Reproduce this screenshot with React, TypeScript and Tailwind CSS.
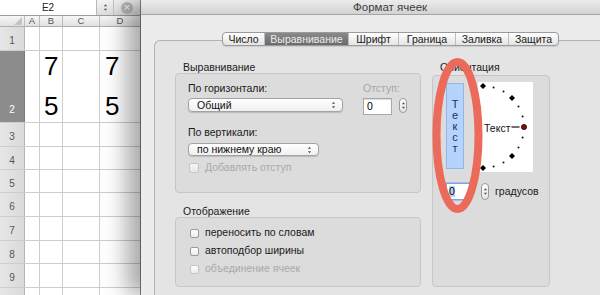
import React from 'react';

const font = "font-['Liberation_Sans',Arial,sans-serif]";

const cols = [
  { id: '', w: 'w-[25px]' },
  { id: 'A', w: 'w-[15px]' },
  { id: 'B', w: 'w-[23px]' },
  { id: 'C', w: 'w-[37px]' },
  { id: 'D', w: 'w-[40px]' },
];

// row 10 is only a sliver at the bottom edge, its number is not visible
const rows = [
  { n: '1', h: 'h-[24px]' },
  { n: '2', h: 'h-[72px]', sel: true },
  { n: '3', h: 'h-[24px]' },
  { n: '4', h: 'h-[23px]' },
  { n: '5', h: 'h-[23px]' },
  { n: '6', h: 'h-[24px]' },
  { n: '7', h: 'h-[24px]' },
  { n: '8', h: 'h-[23px]' },
  { n: '9', h: 'h-[24px]' },
  { n: '', h: 'h-[24px]' },
];

const tabs = [
  { label: 'Число', w: 'w-[42px]' },
  { label: 'Выравнивание', w: 'w-[84px]', active: true },
  { label: 'Шрифт', w: 'w-[50px]' },
  { label: 'Граница', w: 'w-[57px]' },
  { label: 'Заливка', w: 'w-[53px]' },
  { label: 'Защита', w: 'w-[49px]' },
];

function UpDown({ className = '' }: { className?: string }) {
  return (
    <svg viewBox="0 0 6 10" className={className}>
      <path d="M3 1 L5 3.5 H1 Z M3 9 L5 6.5 H1 Z" fill="#555" />
    </svg>
  );
}

function Stepper({ h }: { h: string }) {
  return (
    <div className={`flex w-[8px] ${h} items-center justify-center rounded-[4px] border border-[#9a9a9a] bg-linear-to-b from-white to-[#e4e4e4]`}>
      <UpDown className="h-[9px] w-[5px]" />
    </div>
  );
}

function Select({ w, h, label }: { w: string; h: string; label: string }) {
  return (
    <div className={`flex ${w} ${h} items-center justify-between rounded-[4px] border border-[#a3a3a3] bg-linear-to-b from-white to-[#f0f0f0] pl-[8px] pr-[6px] text-[10.5px] leading-none text-[#111] shadow-[0_1px_1px_rgba(0,0,0,0.15)]`}>
      <span>{label}</span>
      <UpDown className="h-[8px] w-[5px]" />
    </div>
  );
}

function Check({ label, disabled }: { label: string; disabled?: boolean }) {
  return (
    <div className="flex h-[18px] items-center gap-[6px]">
      <div
        className={`h-[9px] w-[9px] rounded-[2px] border bg-linear-to-b from-white to-[#ececec] ${
          disabled ? 'border-[#c4c4c4]' : 'border-[#9a9a9a]'
        }`}
      />
      <span className={`text-[10.5px] ${disabled ? 'text-[#a9a9a9]' : 'text-[#1a1a1a]'}`}>{label}</span>
    </div>
  );
}

function Sheet() {
  return (
    <div className="flex w-[141px] shrink-0 flex-col border-r border-[#8a8a8a] bg-white">
      <div className="flex h-[16px] border-b border-[#9c9c9c] bg-linear-to-b from-[#f4f4f4] to-[#dcdcdc]">
        <div className="flex w-[97px] items-center justify-center border-r border-[#b8b8b8] bg-white text-[10px] text-[#222]">
          E2
        </div>
        <div className="flex w-[17px] items-center justify-center border-r border-[#c4c4c4]">
          <UpDown className="h-[9px] w-[5px]" />
        </div>
        <div className="flex flex-1 items-center justify-center">
          <div className="flex h-[12px] w-[12px] items-center justify-center rounded-full bg-[#b9b9b9] text-[11px] leading-none text-white">
            ×
          </div>
        </div>
      </div>
      <div className="flex h-[11px] border-b border-[#aeaeae] bg-linear-to-b from-[#f6f6f6] to-[#e2e2e2]">
        {cols.map((c, i) => (
          <div
            key={i}
            className={`flex ${c.w} items-center justify-center text-[9.5px] leading-none text-[#555] ${
              i < 4 ? 'border-r border-[#bdbdbd]' : ''
            }`}
          >
            {i === 0 ? (
              <svg viewBox="0 0 24 10" className="h-[10px] w-[24px]">
                <path d="M22 1 V9 H14 Z" fill="#c2c2c2" />
              </svg>
            ) : (
              c.id
            )}
          </div>
        ))}
      </div>
      {rows.map((r, idx) => (
        <div key={idx} className={`flex ${r.h} shrink-0 border-b border-[#cdcdcd]`}>
          <div
            className={`flex w-[25px] justify-center border-r text-[10px] ${
              r.sel
                ? 'items-end border-[#7a7a7a] bg-[#8c8c8c] pb-[5px] text-white'
                : 'items-center border-[#b5b5b5] bg-linear-to-r from-[#e6e6e6] to-[#dadada] pt-[4px] text-[#555]'
            }`}
          >
            {r.n}
          </div>
          <div className="w-[15px] border-r border-[#cdcdcd]" />
          <div className="w-[23px] border-r border-[#cdcdcd] pl-[4px]">
            {r.sel && (
              <div className="flex flex-col gap-[10px] text-[26px] leading-[30px] text-black">
                <span>7</span>
                <span>5</span>
              </div>
            )}
          </div>
          <div className="w-[37px] border-r border-[#cdcdcd]" />
          <div className="w-[40px] pl-[5px]">
            {r.sel && (
              <div className="flex flex-col gap-[10px] text-[26px] leading-[30px] text-black">
                <span>7</span>
                <span>5</span>
              </div>
            )}
          </div>
        </div>
      ))}
    </div>
  );
}

function Dial() {
  const cx = 5;
  const cy = 45;
  const r = 41;
  const small = [75, 60, 30, 15, -15, -30, -60, -75];
  const big = [90, 45, -45, -90];
  const pt = (a: number) => {
    const rad = (a * Math.PI) / 180;
    return [cx + r * Math.cos(rad), cy - r * Math.sin(rad)];
  };
  return (
    <div className="relative -mt-[1px] flex h-[90px] w-[55px] items-center bg-white pl-[6px] pt-[4px]">
      <svg viewBox="0 0 55 90" className="absolute inset-0 h-[90px] w-[55px]">
        {small.map((a) => {
          const [x, y] = pt(a);
          return <circle key={a} cx={x} cy={y} r={1} fill="#111" />;
        })}
        {big.map((a) => {
          const [x, y] = pt(a);
          return (
            <polygon
              key={a}
              points={`${x},${y - 3} ${x + 3},${y} ${x},${y + 3} ${x - 3},${y}`}
              fill="#000"
            />
          );
        })}
        <line x1="33.5" y1="45" x2="41.5" y2="45" stroke="#111" strokeWidth="1.2" />
        <circle cx="46" cy="45" r="2.6" fill="#7a1010" stroke="#3a0000" strokeWidth="0.8" />
      </svg>
      <span className="relative text-[10.5px] text-[#111]">Текст</span>
    </div>
  );
}

function Dialog() {
  return (
    <div className="relative z-10 flex flex-1 flex-col bg-[#ececec] shadow-[-14px_0_22px_rgba(0,0,0,0.35)]">
      <div className="h-[15px] border-b border-[#a3a3a3] bg-linear-to-b from-[#ececec] to-[#d2d2d2] pl-[212px] text-[11.5px] leading-[14px] text-[#3c3c3c]">
        Формат ячеек
      </div>
      <div className="flex-1 overflow-hidden pl-[13px] pt-[25px]">
        <div className="h-full rounded-tl-[6px] border-l border-t border-[#b3b3b3] bg-[#e4e4e4]">
          <div className="ml-[67px] -mt-[9px] flex h-[14px] w-fit overflow-hidden rounded-[4px] border border-[#9a9a9a] bg-linear-to-b from-white to-[#e4e4e4] shadow-[0_1px_1px_rgba(0,0,0,0.1)]">
            {tabs.map((t, i) => (
              <div
                key={t.label}
                className={`flex ${t.w} items-center justify-center text-[10.5px] leading-none ${
                  i < tabs.length - 1 ? 'border-r border-[#bdbdbd]' : ''
                } ${t.active ? 'bg-linear-to-b from-[#8a8a8a] to-[#6a6a6a] text-[#ececec]' : 'text-[#1a1a1a]'}`}
              >
                {t.label}
              </div>
            ))}
          </div>
          <div className="flex pl-[20px] pt-[15px]">
            <div className="flex w-[246px] flex-col">
              <div className="h-[12px] pl-[8px] text-[10.5px] leading-[12px] text-[#1a1a1a]">Выравнивание</div>
              <div className="h-[120px] rounded-[4px] border border-[#c6c6c6] bg-[#dcdcdc] pl-[12px] pt-[8px]">
                <div className="flex text-[10.5px] leading-[12px]">
                  <span className="w-[175px] text-[#1a1a1a]">По горизонтали:</span>
                  <span className="text-[#a6a6a6]">Отступ:</span>
                </div>
                <div className="mt-[4px] flex items-start">
                  <Select w="w-[155px]" h="h-[14px]" label="Общий" />
                  <div className="ml-[20px] flex h-[17px] w-[29px] items-center border border-[#a8a8a8] bg-white pl-[3px] text-[10.5px] leading-none shadow-[inset_0_1px_1px_rgba(0,0,0,0.15)]">
                    0
                  </div>
                  <div className="ml-[7px]">
                    <Stepper h="h-[15px]" />
                  </div>
                </div>
                <div className="mt-[11px] text-[10.5px] leading-[12px] text-[#1a1a1a]">По вертикали:</div>
                <div className="mt-[5px]">
                  <Select w="w-[131px]" h="h-[13px]" label="по нижнему краю" />
                </div>
                <div className="mt-[7px] flex h-[10px] items-center gap-[6px] pl-[1px]">
                  <div className="h-[10px] w-[10px] rounded-[2px] border border-[#c6c6c6] bg-linear-to-b from-[#f6f6f6] to-[#e6e6e6]" />
                  <span className="text-[10.5px] text-[#a9a9a9]">Добавлять отступ</span>
                </div>
              </div>
              <div className="mt-[12px] h-[12px] pl-[8px] text-[10.5px] leading-[12px] text-[#1a1a1a]">Отображение</div>
              <div className="h-[70px] rounded-[4px] border border-[#c6c6c6] bg-[#dcdcdc] pl-[14px] pt-[6px]">
                <Check label="переносить по словам" />
                <Check label="автоподбор ширины" />
                <Check label="объединение ячеек" disabled />
              </div>
            </div>
            <div className="ml-[11px] flex w-[118px] flex-col">
              <div className="h-[12px] pl-[8px] text-[10.5px] leading-[12px] text-[#1a1a1a]">Ориентация</div>
              <div className="mt-[2px] h-[212px] rounded-[4px] border border-[#c6c6c6] bg-[#dcdcdc] pl-[13px] pt-[7px]">
                <div className="flex items-start">
                  <div className="flex h-[86px] w-[18px] flex-col items-center justify-center border border-[#94b6e6] bg-[#b6d4fb] text-[11px] leading-[11px] text-[#1b2d6b]">
                    {'Текст'.split('').map((ch, i) => (
                      <span key={i}>{ch}</span>
                    ))}
                  </div>
                  <div className="ml-[14px]">
                    <Dial />
                  </div>
                </div>
                <div className="mt-[11px] flex items-center">
                  <div className="flex h-[17px] w-[25px] items-center border border-[#7fa6dc] bg-white pl-[2px] text-[10.5px] leading-none shadow-[0_0_0_1px_rgba(120,160,220,0.5)]">
                    <span className="bg-[#b6d4fb]">0</span>
                  </div>
                  <div className="ml-[10px]">
                    <Stepper h="h-[17px]" />
                  </div>
                  <span className="ml-[6px] text-[10.5px] text-[#1a1a1a]">градусов</span>
                </div>
              </div>
            </div>
          </div>
        </div>
      </div>
    </div>
  );
}

export default function App() {
  return (
    <div className={`relative flex h-[295px] w-[600px] overflow-hidden bg-white ${font}`}>
      <Sheet />
      <Dialog />
      <svg viewBox="0 0 55 160" className="pointer-events-none absolute left-[430px] top-[56px] z-20 h-[160px] w-[55px]">
        <ellipse cx="27.5" cy="79.5" rx="21" ry="73.5" fill="none" stroke="#ec6a5a" strokeWidth="8" />
      </svg>
    </div>
  );
}
